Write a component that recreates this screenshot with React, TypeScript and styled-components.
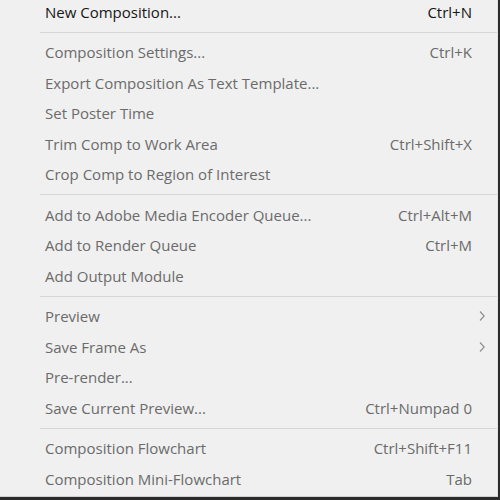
import React from 'react';
import styled, { createGlobalStyle } from 'styled-components';

const GlobalStyle = createGlobalStyle`
    html, body {
        margin: 0;
        padding: 0;
        background: #2b2b2b;
        overflow: hidden;
    }
`;

type Item = { label: string; shortcut?: string; submenu?: boolean; enabled?: boolean };
type Group = Item[];

const groups: Group[] = [
    [{ label: 'New Composition...', shortcut: 'Ctrl+N', enabled: true }],
    [
        { label: 'Composition Settings...', shortcut: 'Ctrl+K' },
        { label: 'Export Composition As Text Template...' },
        { label: 'Set Poster Time' },
        { label: 'Trim Comp to Work Area', shortcut: 'Ctrl+Shift+X' },
        { label: 'Crop Comp to Region of Interest' },
    ],
    [
        { label: 'Add to Adobe Media Encoder Queue...', shortcut: 'Ctrl+Alt+M' },
        { label: 'Add to Render Queue', shortcut: 'Ctrl+M' },
        { label: 'Add Output Module' },
    ],
    [
        { label: 'Preview', submenu: true },
        { label: 'Save Frame As', submenu: true },
        { label: 'Pre-render...' },
        { label: 'Save Current Preview...', shortcut: 'Ctrl+Numpad 0' },
    ],
    [
        { label: 'Composition Flowchart', shortcut: 'Ctrl+Shift+F11' },
        { label: 'Composition Mini-Flowchart', shortcut: 'Tab' },
    ],
];

export default function App() {
    return (
        <>
            <GlobalStyle />
            <Menu>
                {groups.map((group, gi) => (
                    <React.Fragment key={gi}>
                        {gi > 0 && <Separator />}
                        {group.map((item) => (
                            <Row key={item.label} enabled={!!item.enabled}>
                                <Label>{item.label}</Label>
                                <Shortcut>{item.shortcut}</Shortcut>
                                <Arrow>
                                    {item.submenu && (
                                        <svg width="7" height="12" viewBox="0 0 7 12">
                                            <path d="M1 1.5 L5.2 6 L1 10.5" fill="none" stroke="#8c8c8c" strokeWidth="1.1" />
                                        </svg>
                                    )}
                                </Arrow>
                            </Row>
                        ))}
                    </React.Fragment>
                ))}
            </Menu>
        </>
    );
}

const Menu = styled.div`
    width: 498px;
    height: 497px;
    box-sizing: border-box;
    background: #f0f0f0;
    border-right: 1px solid #e4e4e4;
    border-bottom: 1px solid #d0d0d0;
    overflow: hidden;
    font-family: "Open Sans", "Noto Sans", sans-serif;
`;

const Row = styled.div<{ enabled: boolean }>`
    display: grid;
    grid-template-columns: 1fr auto 25px;
    align-items: center;
    height: 30.5px;
    padding-left: 45px;
    font-size: 15px;
    color: ${props => (props.enabled ? '#161616' : '#6b6b6b')};
    &:first-child {
        margin-top: -3.5px;
    }
`;

const Label = styled.span`
    white-space: nowrap;
`;

const Shortcut = styled.span`
    white-space: nowrap;
`;

const Arrow = styled.span`
    display: flex;
    align-items: center;
    padding-left: 7px;
`;

const Separator = styled.div`
    height: 1px;
    margin: 4.5px 0 4.5px 40px;
    background: #d6d6d6;
`;
